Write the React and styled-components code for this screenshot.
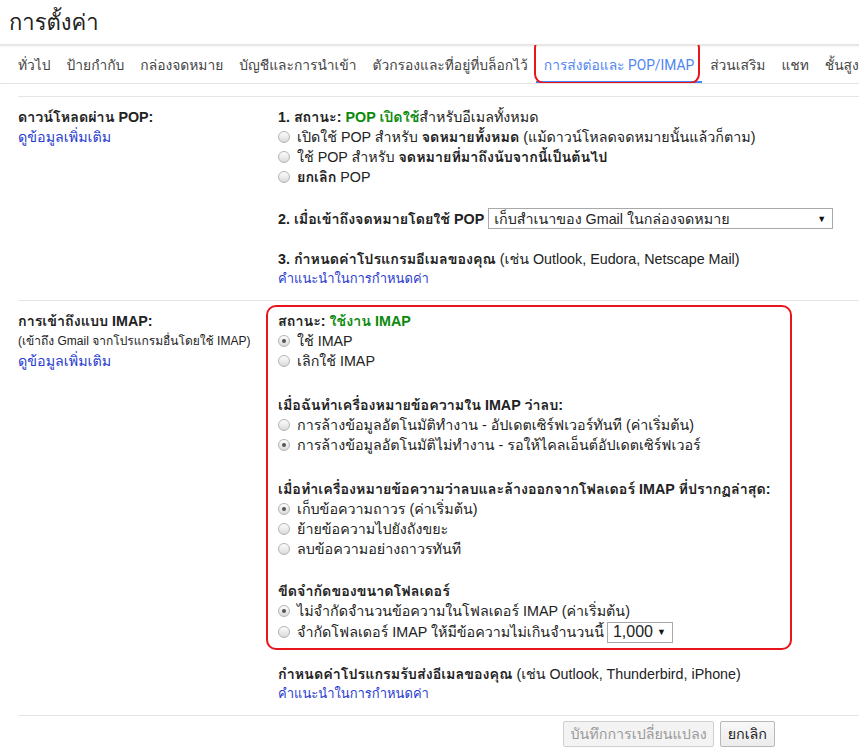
import React from "react";
import styled, { createGlobalStyle, css } from "styled-components";

const GlobalStyle = createGlobalStyle`
  html, body {
    margin: 0;
    padding: 0;
    background: #fff;
  }
  body {
    font-family: "Liberation Sans", Loma, "Noto Sans Thai", sans-serif;
    font-size: 14.3px;
    color: #222;
    overflow: hidden;
  }
`;

const Page = styled.div`
  width: 859px;
  height: 755px;
  overflow: hidden;
`;

const Header = styled.div`
  height: 44px;
  display: flex;
  align-items: center;
  padding-left: 9px;
`;

const Title = styled.h1`
  margin: 0;
  font-size: 22px;
  font-weight: 400;
  color: #222;
`;

const TabBar = styled.nav`
  height: 38px;
  display: flex;
  align-items: stretch;
  padding-left: 10px;
  border-top: 1px solid #e6e6e6;
  box-shadow: inset 0 2px 2px -1px rgba(0, 0, 0, 0.12);
  border-bottom: 1px solid #e3e3e3;
  white-space: nowrap;
  overflow: hidden;
`;

const Tab = styled.div`
  position: relative;
  display: flex;
  align-items: center;
  flex: none;
  padding: 4px 8px 0;
  font-family: Roboto, Loma, "Liberation Sans", sans-serif;
  font-size: 13.8px;
  color: ${p => (p.$active ? "#4f86f0" : "#444")};
  border-bottom: 3px solid ${p => (p.$active ? "#4285f4" : "transparent")};
  margin-bottom: -1px;
`;

const Highlight = styled.span`
  position: absolute;
  left: -2px;
  right: 2px;
  top: -7px;
  bottom: -3px;
  border: 2px solid #e8151b;
  border-radius: 10px;
  pointer-events: none;
`;

const Content = styled.div`
  padding-left: 18px;
  margin-top: 12px;
`;

const Section = styled.section`
  display: grid;
  grid-template-columns: 260px 1fr;
  border-top: 1px solid #e5e5e5;
  padding: 10px 0 11px;
  line-height: 20px;
`;

const Label = styled.div`
  display: flex;
  flex-direction: column;
`;

const Strong = styled.span`
  font-weight: 700;
`;

const Note = styled.span`
  font-size: 12px;
`;

const Link = styled.a`
  color: #2a3ccf;
  text-decoration: none;
  cursor: pointer;
  font-size: ${p => (p.$small ? "13px" : "inherit")};
`;

const Green = styled.span`
  color: #0b8a0b;
  font-weight: 700;
`;

const Column = styled.div`
  display: flex;
  flex-direction: column;
`;

const Item = styled.div`
  display: flex;
  flex-direction: column;
  margin-top: ${p => p.$gap || 0}px;
`;

const Row = styled.div`
  display: flex;
  align-items: center;
  min-height: 20px;
  gap: ${p => p.$gap ?? 4}px;
  white-space: nowrap;
`;

const Framed = styled.div`
  margin-left: -12px;
  margin-top: -6px;
  width: 502px;
  border: 2px solid #e8151b;
  border-radius: 10px;
  padding: 4px 10px 5px;
  display: flex;
  flex-direction: column;
`;

const Group = styled.div`
  display: flex;
  flex-direction: column;
  margin-top: ${p => p.$gap || 0}px;
  white-space: nowrap;
`;

const RadioRow = styled.label`
  display: flex;
  align-items: center;
  min-height: ${p => (p.$tall ? "22px" : "20px")};
  gap: 7px;
  white-space: nowrap;
`;

const RadioDot = styled.span`
  width: 10px;
  height: 10px;
  border-radius: 50%;
  border: 1px solid #b3b3b3;
  background: linear-gradient(#fdfdfd, #dadada);
  display: flex;
  align-items: center;
  justify-content: center;
  flex: none;
  ${p =>
    p.$checked &&
    css`
      &::after {
        content: "";
        width: 4px;
        height: 4px;
        border-radius: 50%;
        background: #555;
      }
    `}
`;

const Select = styled.div`
  display: flex;
  align-items: center;
  justify-content: space-between;
  width: ${p => p.$width}px;
  height: 21px;
  border: 1px solid #a9a9a9;
  padding: 0 6px 0 5px;
  background: #fff;
  font-size: ${p => p.$size || 14.3}px;
  box-sizing: border-box;
`;

const Caret = styled.span`
  font-size: 9px;
  color: #111;
`;

const Footer = styled.div`
  border-top: 1px solid #e5e5e5;
  display: flex;
  justify-content: flex-end;
  gap: 6px;
  padding: 5px 84px 0 0;
`;

const Button = styled.button`
  height: 26px;
  padding: 0 ${p => (p.disabled ? 6 : 7)}px;
  font-family: inherit;
  font-size: 14.3px;
  border-radius: 2px;
  border: 1px solid ${p => (p.disabled ? "#cfcfcf" : "#b8b8b8")};
  background: ${p => (p.disabled ? "#f3f3f3" : "linear-gradient(#f8f8f8, #ececec)")};
  color: ${p => (p.disabled ? "#9a9a9a" : "#222")};
`;

const Radio = ({ checked, tall, children }) => (
  <RadioRow $tall={tall}>
    <RadioDot $checked={checked} />
    {children}
  </RadioRow>
);

const tabs = [
  "ทั่วไป",
  "ป้ายกำกับ",
  "กล่องจดหมาย",
  "บัญชีและการนำเข้า",
  "ตัวกรองและที่อยู่ที่บล็อกไว้",
  "การส่งต่อและ POP/IMAP",
  "ส่วนเสริม",
  "แชท",
  "ชั้นสูง",
];

export default function App() {
  return (
    <Page>
      <GlobalStyle />
      <Header>
        <Title>การตั้งค่า</Title>
      </Header>
      <TabBar>
        {tabs.map((t, i) => (
          <Tab key={t} $active={i === 5}>
            {t}
            {i === 5 && <Highlight />}
          </Tab>
        ))}
      </TabBar>

      <Content>
        <Section>
          <Label>
            <Strong>ดาวน์โหลดผ่าน POP:</Strong>
            <Link>ดูข้อมูลเพิ่มเติม</Link>
          </Label>
          <Column>
            <Item>
              <Row>
                <span>
                  <Strong>1. สถานะ: </Strong>
                  <Green>POP เปิดใช้</Green>สำหรับอีเมลทั้งหมด
                </span>
              </Row>
              <Radio>
                <span>
                  เปิดใช้ POP สำหรับ <Strong>จดหมายทั้งหมด</Strong> (แม้ดาวน์โหลดจดหมายนั้นแล้วก็ตาม)
                </span>
              </Radio>
              <Radio>
                <span>
                  ใช้ POP สำหรับ <Strong>จดหมายที่มาถึงนับจากนี้เป็นต้นไป</Strong>
                </span>
              </Radio>
              <Radio>
                <span>
                  <Strong>ยกเลิก</Strong> POP
                </span>
              </Radio>
            </Item>
            <Item $gap={21}>
              <Row>
                <Strong>2. เมื่อเข้าถึงจดหมายโดยใช้ POP</Strong>
                <Select $width={345}>
                  <span>เก็บสำเนาของ Gmail ในกล่องจดหมาย</span>
                  <Caret>▼</Caret>
                </Select>
              </Row>
            </Item>
            <Item $gap={20}>
              <Row>
                <span>
                  <Strong>3. กำหนดค่าโปรแกรมอีเมลของคุณ</Strong> (เช่น Outlook, Eudora, Netscape Mail)
                </span>
              </Row>
              <Link $small>คำแนะนำในการกำหนดค่า</Link>
            </Item>
          </Column>
        </Section>

        <Section>
          <Label>
            <Strong>การเข้าถึงแบบ IMAP:</Strong>
            <Note>(เข้าถึง Gmail จากโปรแกรมอื่นโดยใช้ IMAP)</Note>
            <Link>ดูข้อมูลเพิ่มเติม</Link>
          </Label>
          <Column>
            <Framed>
              <Group>
                <span>
                  <Strong>สถานะ: </Strong>
                  <Green>ใช้งาน IMAP</Green>
                </span>
                <Radio checked>ใช้ IMAP</Radio>
                <Radio>เลิกใช้ IMAP</Radio>
              </Group>
              <Group $gap={24}>
                <Strong>เมื่อฉันทำเครื่องหมายข้อความใน IMAP ว่าลบ:</Strong>
                <Radio>การล้างข้อมูลอัตโนมัติทำงาน - อัปเดตเซิร์ฟเวอร์ทันที (ค่าเริ่มต้น)</Radio>
                <Radio checked>การล้างข้อมูลอัตโนมัติไม่ทำงาน - รอให้ไคลเอ็นต์อัปเดตเซิร์ฟเวอร์</Radio>
              </Group>
              <Group $gap={24}>
                <Strong>เมื่อทำเครื่องหมายข้อความว่าลบและล้างออกจากโฟลเดอร์ IMAP ที่ปรากฏล่าสุด:</Strong>
                <Radio checked>เก็บข้อความถาวร (ค่าเริ่มต้น)</Radio>
                <Radio>ย้ายข้อความไปยังถังขยะ</Radio>
                <Radio>ลบข้อความอย่างถาวรทันที</Radio>
              </Group>
              <Group $gap={22}>
                <Strong>ขีดจำกัดของขนาดโฟลเดอร์</Strong>
                <Radio checked>ไม่จำกัดจำนวนข้อความในโฟลเดอร์ IMAP (ค่าเริ่มต้น)</Radio>
                <Radio tall>
                  <Row $gap={3}>
                    จำกัดโฟลเดอร์ IMAP ให้มีข้อความไม่เกินจำนวนนี้
                    <Select $width={66} $size={16}>
                      <span>1,000</span>
                      <Caret>▼</Caret>
                    </Select>
                  </Row>
                </Radio>
              </Group>
            </Framed>
            <Item $gap={14}>
              <span>
                <Strong>กำหนดค่าโปรแกรมรับส่งอีเมลของคุณ</Strong> (เช่น Outlook, Thunderbird, iPhone)
              </span>
              <Link $small>คำแนะนำในการกำหนดค่า</Link>
            </Item>
          </Column>
        </Section>

        <Footer>
          <Button disabled>บันทึกการเปลี่ยนแปลง</Button>
          <Button>ยกเลิก</Button>
        </Footer>
      </Content>
    </Page>
  );
}
